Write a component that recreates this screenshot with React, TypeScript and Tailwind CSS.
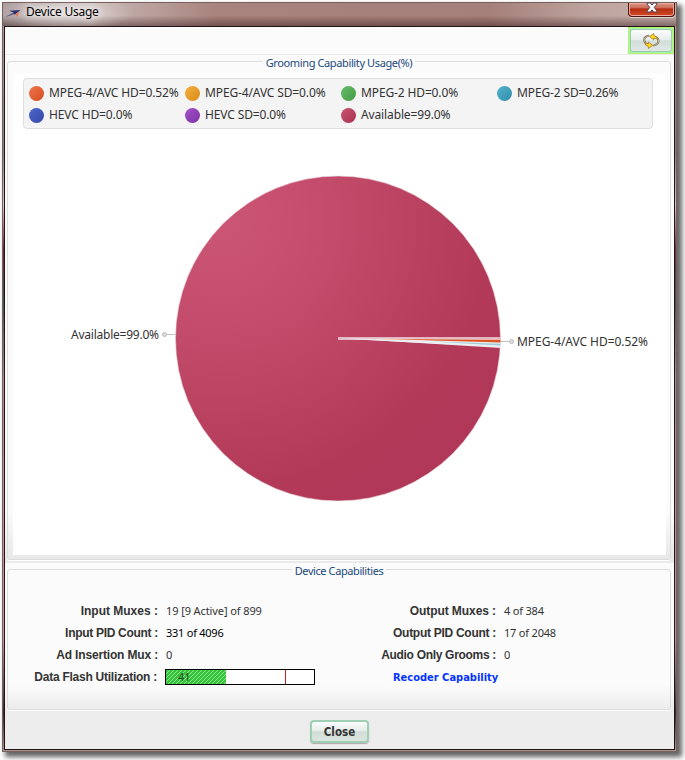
import React from "react";

const legend = [
  { label: "MPEG-4/AVC HD=0.52%", dot: "from-[#f0764a] to-[#d24d1f]" },
  { label: "MPEG-4/AVC SD=0.0%", dot: "from-[#f5b03e] to-[#d98b10]" },
  { label: "MPEG-2 HD=0.0%", dot: "from-[#69bd69] to-[#409a43]" },
  { label: "MPEG-2 SD=0.26%", dot: "from-[#54b2cd] to-[#318eab]" },
  { label: "HEVC HD=0.0%", dot: "from-[#5068cc] to-[#3448aa]" },
  { label: "HEVC SD=0.0%", dot: "from-[#a352c8] to-[#7f30a6]" },
  { label: "Available=99.0%", dot: "from-[#cc5473] to-[#a93050]" },
];

const inputs = [
  { label: "Input Muxes", value: "19 [9 Active] of 899", tone: "text-[#333]", track: "tracking-normal", vtrack: "tracking-[-0.1px]" },
  { label: "Input PID Count", value: "331 of 4096", tone: "text-black", track: "tracking-[-0.3px]", vtrack: "tracking-[-0.25px]" },
  { label: "Ad Insertion Mux", value: "0", tone: "text-[#333]", track: "tracking-[-0.16px]", vtrack: "tracking-normal" },
];

const outputs = [
  { label: "Output Muxes", value: "4 of 384", tone: "text-[#333]", track: "tracking-[-0.08px]", vtrack: "tracking-[-0.2px]" },
  { label: "Output PID Count", value: "17 of 2048", tone: "text-[#333]", track: "tracking-[-0.28px]", vtrack: "tracking-[-0.2px]" },
  { label: "Audio Only Grooms", value: "0", tone: "text-[#333]", track: "tracking-[-0.31px]", vtrack: "tracking-normal" },
];

const ui = "font-['Noto_Sans',sans-serif]";

function Logo() {
  return (
    <svg className="mt-[5px] h-3 w-4" viewBox="0 0 16 12">
      <path d="M4 2.8 15.5 2 9.5 6.8 8 4.300z" fill="#29306f" />
      <path d="M0 9 8.500 4.500l1 1.700L5.500 7.500z" fill="#5d5c8c" />
      <path d="m9.500 7 5-3.800-2.500 6-1-2z" fill="#e8744b" />
    </svg>
  );
}

function TitleBar() {
  return (
    <div className="flex h-[23px] shrink-0 items-start bg-[radial-gradient(ellipse_70px_20px_at_60px_10px,#ffffff90,#fff0),linear-gradient(180deg,#fff0_55%,#301417_155%),linear-gradient(90deg,#a99a9b_0,#c9b9b7_13%,#a8827c_32%,#a57f79_72%,#bfa5a0_88%,#c5b0ac_100%)]">
      <div className="ml-[2px]"><Logo /></div>
      <div className={`ml-[5px] text-[12px] leading-[18px] tracking-[-0.25px] text-black [text-shadow:0_0_6px_#fff,0_0_10px_#fff] ${ui}`}>Device Usage</div>
      <div className="ml-auto mr-px flex h-[14px] w-[47px] items-center justify-center rounded-b-[4px] border border-t-0 border-[#4d1513] bg-[linear-gradient(180deg,#dc9a8a_0,#cb6a55_38%,#b42c12_45%,#d24c2a_100%)] shadow-[inset_0_0_0_1px_#eaa99a,0_1px_0_#e2cfcb]">
        <svg className="-mt-[5px] h-[11px] w-3" viewBox="0 0 12 11">
          <path d="M1 1h3.4L6 3.1 7.6 1H11v1L8.2 5.4 11 9v1H7.6L6 7.8 4.4 10H1V9l2.8-3.6L1 2z" fill="#fff" stroke="#50404b" strokeWidth="1" />
        </svg>
      </div>
    </div>
  );
}

function RefreshIcon() {
  return (
    <svg className="h-4 w-[17px]" viewBox="0 0 17 16">
      <g fill="none" strokeLinecap="round">
        <path d="M5.500 2.800C2.500 3.500 1 5.200 1.200 7.300c.2 1.700 1.400 3.200 3.600 4.500M11 3.700c2.800.7 4.500 2.200 4.500 4.300 0 2-1.700 3.700-4.500 4.400" stroke="#7d7160" strokeWidth="2" />
        <path d="M5.500 2.800C2.500 3.500 1 5.200 1.200 7.300c.2 1.700 1.400 3.200 3.600 4.500M11 3.700c2.800.7 4.500 2.200 4.500 4.300 0 2-1.700 3.700-4.500 4.400" stroke="#dcca95" strokeWidth=".8" />
      </g>
      <path d="M6.500 3.500 10.800.5v1.900l2.600 1.300 1 2.300-3.600-1v2z" fill="#ffd91c" stroke="#a06e1c" strokeWidth=".7" />
      <path d="M9.700 12.300 5.400 15.500v-2L2.900 12.200 2 9.800l3.400 1.100V9z" fill="#ffd91c" stroke="#a06e1c" strokeWidth=".7" />
    </svg>
  );
}

function Pie() {
  return (
    <svg className="mt-[39px] ml-[43px] h-[340px] w-[600px]" viewBox="56 168 600 340">
      <defs>
        <radialGradient id="slice" gradientUnits="userSpaceOnUse" cx="223" cy="223" r="325">
          <stop offset="0" stopColor="#cb5574" />
          <stop offset=".2" stopColor="#c75070" />
          <stop offset=".5" stopColor="#be4665" />
          <stop offset=".82" stopColor="#b23958" />
          <stop offset="1" stopColor="#b03757" />
        </radialGradient>
      </defs>
      <circle cx="338" cy="338.5" r="162.5" fill="url(#slice)" stroke="#e9d3d9" strokeWidth=".6" />
      <path d="M338 338V337H500.5V348Z" fill="#f0dfe4" />
      <path d="M338 337H500.5V340H338Z" fill="#e3b6c3" />
      <path d="M338 338.5 500.5 339V343.5Z" fill="#fae4dc" />
      <path d="M385 338.9 500.5 339.8V342.6Z" fill="#d95729" />
      <path d="M338 338.5 500.5 343V347Z" fill="#e9f3f5" />
      <path d="M430 341.5 500.5 343.7V345.6Z" fill="#9acbd9" />
      <path d="M501 341.5h8M176 334.5h-9" stroke="#c2c2c2" />
      <circle cx="511.5" cy="341.5" r="2" fill="#ddd" stroke="#bbb" />
      <circle cx="164.5" cy="334.5" r="2" fill="#ddd" stroke="#bbb" />
      <g className={ui} fontSize="12" fill="#333">
        <text x="71" y="339" textLength="88">Available=99.0%</text>
        <text x="517" y="346" textLength="131">MPEG-4/AVC HD=0.52%</text>
      </g>
    </svg>
  );
}

function GroupTitle({ children }: { children: React.ReactNode }) {
  return (
    <legend className={`mx-auto h-[12px] px-[3px] text-[11px] leading-[15px] tracking-[-0.41px] text-[#1c4a7c] ${ui}`}>{children}</legend>
  );
}

type RowProps = { label: string; value: string; tone: string; track: string; vtrack: string };

function Row({ label, value, tone, track, vtrack }: RowProps) {
  return (
    <div className="flex h-[22px] items-center">
      <div className={`w-[150px] text-right font-['Liberation_Sans',sans-serif] text-[12px] font-bold whitespace-nowrap text-[#333] ${track}`}>{label} :</div>
      <div className={`ml-[8px] text-[11px] whitespace-nowrap ${vtrack} ${tone} ${ui}`}>{value}</div>
    </div>
  );
}

export default function App() {
  return (
    <div className="h-[760px] w-[685px] overflow-hidden bg-white pt-[2px] pl-[2px]">
      <div className="flex h-[750px] w-[675px] flex-col border border-[#77615e] bg-[linear-gradient(180deg,#b59a96_0,#8a817e_20%,#d7c2bd_27%,#693034_33%,#46534b_40%,#a58d88_50%,#b89b95_85%,#3a2927_95%,#ad948f_100%)] shadow-[4px_4px_5px_1px_#0000009c]">
        <TitleBar />
        <div className="mx-px mb-px flex min-h-0 flex-1 flex-col border border-[#211416] bg-[#fbfbfb]">
          <div className="flex h-[28px] shrink-0 justify-end border-b border-[#ebebeb]">
            <div className="flex h-[27px] w-[46px] items-center justify-center border border-[#b5f36c] bg-[#a6f3a4] p-px">
              <div className="flex h-full w-full items-center justify-center rounded-[3px] border border-[#9ccbae] bg-[linear-gradient(180deg,#fcfdfd_0,#e7eeec_45%,#d2ddd9_52%,#e0e8e4_100%)]"><RefreshIcon /></div>
            </div>
          </div>
          <div className="h-[508px] shrink-0 border-b-2 border-[#eaeaea] bg-[linear-gradient(180deg,#fbfbfb_90%,#e9e9e9_99%)] pr-[3px] pl-[2px]">
            <fieldset className="h-[505px] min-w-0 rounded-[3px] border border-[#dcdcdc] shadow-[0_1px_0_#fff]">
              <GroupTitle><span className="tracking-[-0.38px]">Grooming Capability Usage(%)</span></GroupTitle>
              <div className="mr-[4px] ml-[5px] mt-[6px] h-[482px] bg-white pt-[5px]">
                <div className="ml-[10px] grid h-[51px] w-[630px] grid-cols-[156px_156px_156px_1fr] content-start rounded-[4px] border border-[#dedede] bg-[#f4f4f4] pt-[3px] pl-[5px]">
                  {legend.map((item) => (
                    <div key={item.label} className="flex h-[22px] items-center">
                      <span className={`size-[15px] shrink-0 rounded-full bg-linear-to-br ${item.dot}`} />
                      <span className={`ml-[5px] text-[12px] tracking-[-0.13px] whitespace-nowrap text-[#333] ${ui}`}>{item.label}</span>
                    </div>
                  ))}
                </div>
                <Pie />
              </div>
            </fieldset>
          </div>
          <div className="h-[149px] shrink-0 bg-[linear-gradient(180deg,#fbfbfb_82%,#ececec_98%)] pr-[3px] pl-[2px]">
            <fieldset className="h-[147px] min-w-0 rounded-[3px] border border-[#dcdcdc] shadow-[0_1px_0_#fff]">
              <GroupTitle>Device Capabilities</GroupTitle>
              <div className="mt-[25px] flex">
                <div className="w-[338px]">
                  {inputs.map((r) => <Row key={r.label} {...r} />)}
                  <div className="flex h-[22px] items-center">
                    <div className="w-[149px] text-right font-['Liberation_Sans',sans-serif] text-[12px] font-bold tracking-[-0.25px] whitespace-nowrap text-[#333]">Data Flash Utilization :</div>
                    <div className="ml-[8px] flex h-4 w-[150px] border border-black bg-white">
                      <div className={`w-[60px] bg-[repeating-linear-gradient(135deg,#36c33c_0_2.2px,#8ee68e_2.2px_2.83px)] pl-[12px] text-[11px] leading-[14px] text-[#244a24] ${ui}`}>41</div>
                      <div className="ml-[59px] w-px bg-[#c82020]" />
                    </div>
                  </div>
                </div>
                <div>
                  {outputs.map((r) => <Row key={r.label} {...r} />)}
                  <div className="ml-[47px] flex h-[22px] items-center pt-[2px] font-['DejaVu_Sans_Condensed','DejaVu_Sans',sans-serif] text-[11px] font-bold text-[#0433ff]">Recoder Capability</div>
                </div>
              </div>
            </fieldset>
          </div>
          <div className="flex flex-1 justify-center bg-[#ededed] pt-[8px]">
            <button className="h-[23px] w-[59px] rounded-[4px] border-2 border-[#9fcfb3] bg-[linear-gradient(180deg,#fafcfb_0,#e5edea_45%,#d2ddd8_52%,#dce5e0_100%)] font-['DejaVu_Sans_Condensed','DejaVu_Sans',sans-serif] text-[11.5px] leading-[20px] font-bold text-[#333] shadow-[0_1px_1px_#aaa]">Close</button>
          </div>
        </div>
      </div>
    </div>
  );
}
